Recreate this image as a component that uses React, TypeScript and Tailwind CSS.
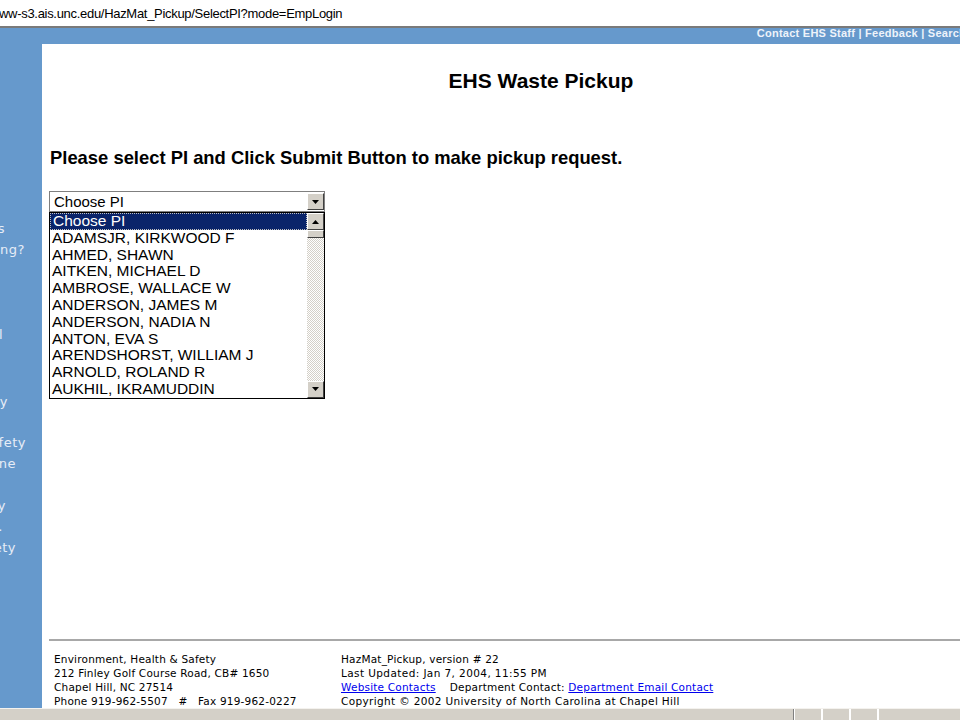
const names = [
  "Choose PI",
  "ADAMSJR, KIRKWOOD F",
  "AHMED, SHAWN",
  "AITKEN, MICHAEL D",
  "AMBROSE, WALLACE W",
  "ANDERSON, JAMES M",
  "ANDERSON, NADIA N",
  "ANTON, EVA S",
  "ARENDSHORST, WILLIAM J",
  "ARNOLD, ROLAND R",
  "AUKHIL, IKRAMUDDIN",
];

// left nav, scrolled so only the word endings show
const navLines = [
  { text: "Questions", mt: "mt-[174px]", pr: "pr-[37px]" },
  { text: "Training?", mt: "mt-0", pr: "pr-[17px]" },
  { text: "Manual", mt: "mt-[64px]", pr: "pr-[39px]" },
  { text: "Emergency", mt: "mt-[46px]", pr: "pr-[34px]" },
  { text: "Lab Safety", mt: "mt-[20px]", pr: "pr-[16px]" },
  { text: "Hotline", mt: "mt-0", pr: "pr-[26px]" },
  { text: "Policy", mt: "mt-[21px]", pr: "pr-[36px]" },
  { text: "Dept.", mt: "mt-0", pr: "pr-[39px]" },
  { text: "Fire Safety", mt: "mt-0", pr: "pr-[26px]" },
];

function Arrow({ up }: { up?: boolean }) {
  return (
    <div className="w-[17px] h-[17px] bg-[#d4d0c8] border border-t-white border-l-white border-r-[#404040] border-b-[#404040] flex items-center justify-center">
      <svg width="7" height="4" viewBox="0 0 7 4">
        {up ? (
          <path d="M0 4 L3.5 0 L7 4 Z" fill="#000" />
        ) : (
          <path d="M0 0 L7 0 L3.5 4 Z" fill="#000" />
        )}
      </svg>
    </div>
  );
}

export default function App() {
  return (
    <div className="w-[960px] h-[720px] overflow-hidden flex flex-col bg-white font-['Liberation_Sans',Arial,sans-serif]">
      {/* address bar */}
      <div className="h-[26px] shrink-0 bg-white flex items-center text-[13px] tracking-[-0.3px] text-black leading-none whitespace-nowrap -ml-[1px]">
        ww-s3.ais.unc.edu/HazMat_Pickup/SelectPI?mode=EmpLogin
      </div>
      <div className="h-[2px] shrink-0 bg-[#7a7a7a]" />

      {/* top link bar */}
      <div className="h-[16px] shrink-0 bg-[#6699cc] flex justify-end items-start overflow-hidden whitespace-nowrap">
        <span className="text-[11px] leading-[10px] font-bold tracking-[0.25px] text-[#eef3fa] -mr-[6px]">
          Contact EHS Staff | Feedback | Search
        </span>
      </div>

      <div className="flex flex-1 min-h-0">
        {/* sidebar */}
        <div className="w-[42px] shrink-0 bg-[#6699cc] overflow-hidden flex flex-col">
          {navLines.map((l) => (
            <div
              key={l.text}
              className={`${l.mt} ${l.pr} h-[21px] leading-[21px] flex justify-end whitespace-nowrap text-[13px] tracking-[0.5px] text-[#e6edf7] font-['DejaVu_Sans',Verdana,sans-serif]`}
            >
              <span className="shrink-0">{l.text}</span>
            </div>
          ))}
        </div>

        {/* content */}
        <div className="flex-1 min-w-0 flex flex-col pl-[7px]">
          <div className="pl-[73px] pt-[25px] text-center text-[21px] font-bold text-black leading-[24px]">
            EHS Waste Pickup
          </div>
          <div className="mt-[54px] pl-[1px] text-[18.4px] font-bold text-black leading-[22px] whitespace-nowrap">
            Please select PI and Click Submit Button to make pickup request.
          </div>

          <div className="relative mt-[22px] w-[276px]">
            <div className="h-[21px] border border-[#7f7f7f] bg-white flex items-center">
              <span className="flex-1 pl-[4px] text-[15px] text-black leading-none">
                Choose PI
              </span>
              <Arrow />
            </div>

            {/* open dropdown */}
            <div className="absolute left-0 top-[21px] w-[276px] border border-black bg-white flex">
              <div className="flex-1 flex flex-col">
                {names.map((n, i) => (
                  <div
                    key={n}
                    className={
                      i === 0
                        ? "h-[16.8px] leading-[16.8px] pl-[3px] text-[15.5px] whitespace-nowrap bg-[#0a246a] text-white outline-1 outline-dotted outline-[#c0c0c0] -outline-offset-1"
                        : "h-[16.8px] leading-[16.8px] pl-[2px] text-[15.5px] whitespace-nowrap text-black"
                    }
                  >
                    {n}
                  </div>
                ))}
              </div>
              <div className="w-[17px] flex flex-col bg-[repeating-conic-gradient(#ffffff_0_25%,#d4d0c8_0_50%)] bg-[length:2px_2px]">
                <Arrow up />
                <div className="h-[8px] bg-[#d4d0c8] border border-t-white border-l-white border-r-[#404040] border-b-[#404040]" />
                <div className="flex-1" />
                <Arrow />
              </div>
            </div>
          </div>

          <div className="flex-1" />

          {/* footer */}
          <div className="h-[2px] bg-[#a8a8a8] mb-[11px]" />
          <div className="flex text-[10.5px] leading-[14px] text-black tracking-[0.2px] font-['DejaVu_Sans',Verdana,sans-serif]">
            <div className="w-[292px] pl-[5px]">
              <div>Environment, Health &amp; Safety</div>
              <div>212 Finley Golf Course Road, CB# 1650</div>
              <div>Chapel Hill, NC 27514</div>
              <div className="whitespace-pre">Phone 919-962-5507   #   Fax 919-962-0227</div>
            </div>
            <div>
              <div>HazMat_Pickup, version # 22</div>
              <div className="tracking-[0.4px]">Last Updated: Jan 7, 2004, 11:55 PM</div>
              <div className="whitespace-nowrap">
                <a className="text-[#0000ee] underline" href="#">
                  Website Contacts
                </a>
                <span className="ml-[14px]">Department Contact: </span>
                <a className="text-[#0000ee] underline" href="#">
                  Department Email Contact
                </a>
              </div>
              <div className="tracking-[0.35px]">Copyright © 2002 University of North Carolina at Chapel Hill</div>
            </div>
          </div>
        </div>
      </div>

      {/* status bar */}
      <div className="h-[12px] shrink-0 border-t border-[#f4f2ee] bg-[#d4d0c8] flex">
        <div className="w-[794px] border-r border-[#808080]" />
        <div className="w-[28px] border-l border-white border-r border-[#808080]" />
        <div className="w-[28px] border-l border-white border-r border-[#808080]" />
        <div className="w-[28px] border-l border-white border-r border-[#808080]" />
        <div className="flex-1 border-l border-white" />
      </div>
    </div>
  );
}
